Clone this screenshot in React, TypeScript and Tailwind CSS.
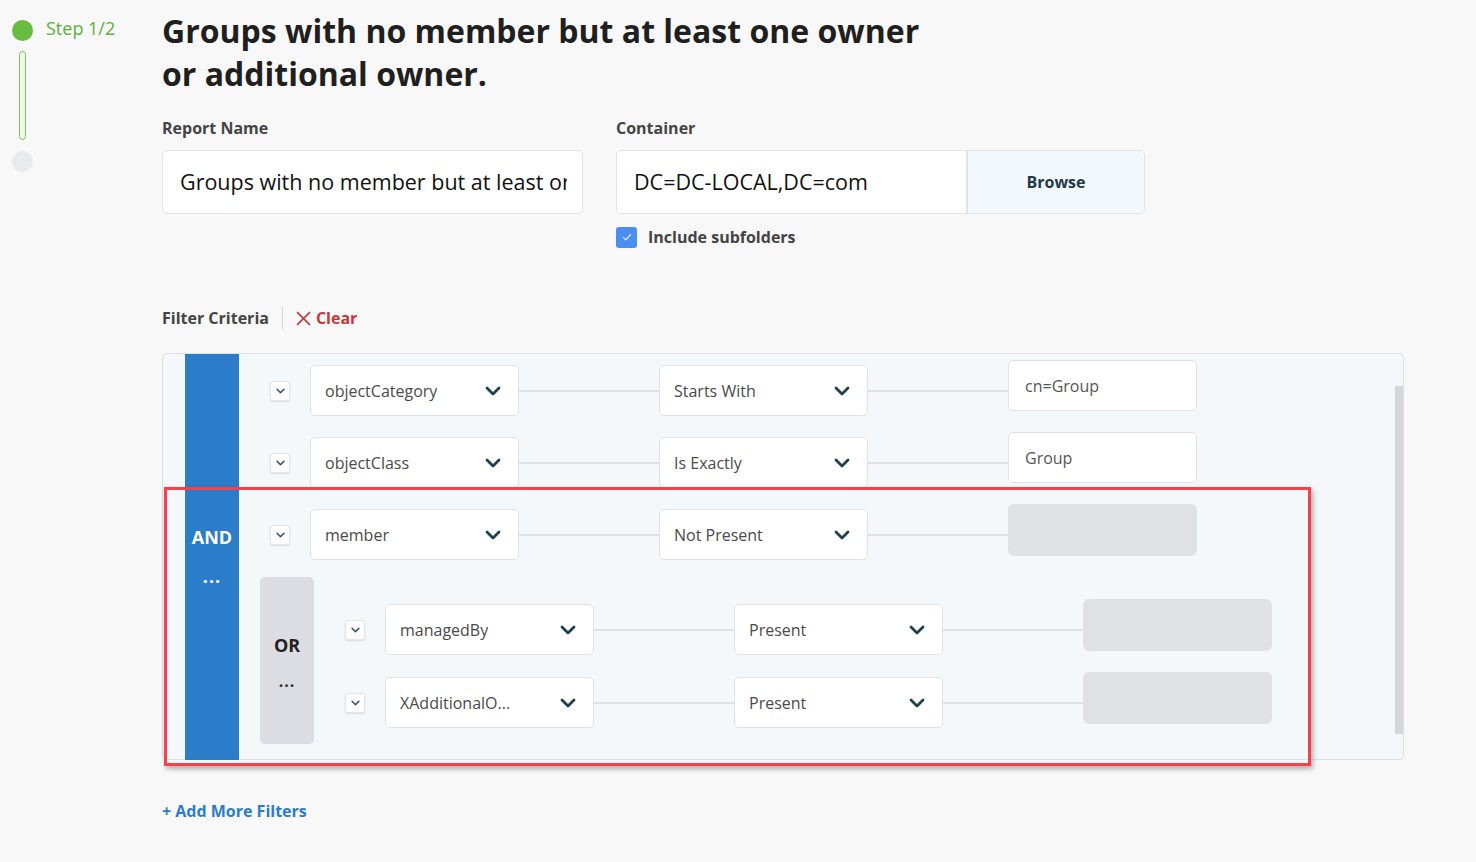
import React from 'react';

type Row = { field: string; op: string; value?: string };

const font = { fontFamily: '"Open Sans", "Noto Sans", sans-serif' };

function Chevron({ className = '' }: { className?: string }) {
  return (
    <svg viewBox="0 0 16 10" className={className} fill="none">
      <path d="M2 2l6 6 6-6" stroke="currentColor" strokeWidth="2.8" strokeLinecap="round" strokeLinejoin="round" />
    </svg>
  );
}

function Toggle() {
  return (
    <div className="w-5 h-5 shrink-0 rounded-[3px] bg-white border border-[#e3e7ea] shadow-[0_1px_2px_rgba(0,0,0,0.12)] flex items-center justify-center text-[#2d5468]">
      <Chevron className="w-[9px] h-[6px]" />
    </div>
  );
}

function Select({ label }: { label: string }) {
  return (
    <div className="w-[209px] h-[51px] shrink-0 bg-white border border-[#dfe3e6] rounded-[5px] flex items-center justify-between pl-[14px] pr-[17px]">
      <span className="text-[16px] text-[#4a4a4a] truncate">{label}</span>
      <Chevron className="w-[16px] h-[10px] text-[#1d3f50]" />
    </div>
  );
}

function Line() {
  return <div className="w-[140px] h-[2px] shrink-0 bg-[#dfe2e5]" />;
}

function FilterRow({ row }: { row: Row }) {
  return (
    <div className="flex items-center">
      <Toggle />
      <div className="w-5" />
      <Select label={row.field} />
      <Line />
      <Select label={row.op} />
      <Line />
      {row.value !== undefined ? (
        <div className="w-[189px] h-[51px] -mt-[10px] shrink-0 bg-white border border-[#dfe3e6] rounded-[5px] flex items-center px-4 text-[16px] text-[#555]">
          {row.value}
        </div>
      ) : (
        <div className="w-[189px] h-[52px] -mt-[10px] shrink-0 bg-[#e0e1e5] rounded-[6px]" />
      )}
    </div>
  );
}

const andRows: Row[] = [
  { field: 'objectCategory', op: 'Starts With', value: 'cn=Group' },
  { field: 'objectClass', op: 'Is Exactly', value: 'Group' },
  { field: 'member', op: 'Not Present' },
];

const orRows: Row[] = [
  { field: 'managedBy', op: 'Present' },
  { field: 'XAdditionalO...', op: 'Present' },
];

export default function App() {
  return (
    <div className="min-h-[862px] w-full bg-[#f8f8f8] flex" style={font}>
      {/* Stepper */}
      <div className="w-[162px] shrink-0 pl-3 pt-5">
        <div className="h-[21px] flex items-center gap-[13px]">
          <div className="w-[21px] h-[21px] rounded-full bg-[#66bd3f]" />
          <span className="text-[18px] leading-none text-[#5eae3a] -mt-[5px]">Step 1/2</span>
        </div>
        <div className="ml-[7px] mt-[10px] w-[7px] h-[89px] rounded-full border border-[#7cc55a] bg-[#f0f7ec]" />
        <div className="mt-[11px] w-[21px] h-[21px] rounded-full bg-[#e9eaee]" />
      </div>

      {/* Main */}
      <div className="w-[1242px] shrink-0 pt-[9px]">
        <h1 className="max-w-[790px] text-[32px] leading-[43px] font-bold text-[#1f1f1f]">
          Groups with no member but at least one owner or additional owner.
        </h1>

        <div className="mt-[22px] flex gap-[33px]">
          <div className="w-[421px]">
            <div className="text-[16px] leading-[22px] font-bold text-[#444]">Report Name</div>
            <div className="mt-[11px] h-[64px] bg-white border border-[#dfe3e6] rounded-[5px] flex items-center pl-[17px] pr-[15px]">
              <div className="overflow-hidden whitespace-nowrap text-[21.5px] text-[#111]">
                Groups with no member but at least one owner
              </div>
            </div>
          </div>
          <div className="w-[529px]">
            <div className="text-[16px] leading-[22px] font-bold text-[#444]">Container</div>
            <div className="mt-[11px] h-[64px] flex border border-[#dfe3e6] rounded-[5px] overflow-hidden">
              <div className="w-[351px] bg-white flex items-center pl-[17px] border-r-2 border-[#dfe3e6]">
                <span className="text-[21.5px] text-[#111]">DC=DC-LOCAL,DC=com</span>
              </div>
              <div className="flex-1 bg-[#f2f8fb] flex items-center justify-center text-[16px] font-bold text-[#1e3a4a]">
                Browse
              </div>
            </div>
            <div className="mt-[11px] flex items-center gap-[11px]">
              <div className="w-[21px] h-[21px] rounded-[3px] bg-[#4a8ff0] flex items-center justify-center">
                <svg viewBox="0 0 12 10" className="w-[10px] h-[8px]" fill="none">
                  <path d="M1 5l3.5 3.5L11 1.5" stroke="white" strokeWidth="1.3" />
                </svg>
              </div>
              <span className="text-[16px] font-bold text-[#444]">Include subfolders</span>
            </div>
          </div>
        </div>

        <div className="mt-[58px] flex items-center h-[22px]">
          <span className="text-[16px] font-bold text-[#444]">Filter Criteria</span>
          <div className="mx-[13px] w-px h-[22px] bg-[#d8d8d8]" />
          <span className="flex items-center gap-[5px] text-[16px] font-bold text-[#c4393c]">
            <svg viewBox="0 0 14 14" className="w-[15px] h-[15px]" fill="none">
              <path d="M1 1l12 12M13 1L1 13" stroke="currentColor" strokeWidth="1.5" />
            </svg>
            Clear
          </span>
        </div>

        {/* Filter panel */}
        <div className="relative mt-[24px] h-[407px] bg-[#f5f8fa] border border-[#dde1e5] rounded-[4px] pl-[22px] pr-4 flex">
          <div className="w-[54px] shrink-0 bg-[#2b7cc9] flex flex-col items-center justify-center pb-[6px] text-white -mb-px">
            <span className="text-[18px] font-bold">AND</span>
            <span className="mt-[16px] text-[18px] leading-none font-bold tracking-[1px]">...</span>
          </div>
          <div className="pl-[31px] pt-[11px] flex flex-col">
            <div className="flex flex-col gap-[21px]">
              {andRows.map((r, i) => (
                <FilterRow key={i} row={r} />
              ))}
            </div>
            <div className="mt-[17px] -ml-[10px] flex">
              <div className="w-[54px] h-[167px] shrink-0 bg-[#dcdde2] rounded-[5px] flex flex-col items-center justify-center">
                <span className="text-[18px] leading-[25px] font-bold text-[#222]">OR</span>
                <span className="mt-[15px] text-[16px] leading-none font-bold text-[#333] tracking-[1px]">...</span>
              </div>
              <div className="pl-[31px] pt-[27px] flex flex-col gap-[22px]">
                {orRows.map((r, i) => (
                  <FilterRow key={i} row={r} />
                ))}
              </div>
            </div>
          </div>

          {/* scrollbar */}
          <div className="absolute right-0 top-[32px] w-2 h-[348px] bg-[#d6d6d6]" />

          {/* highlight annotation */}
          <div className="absolute left-[1px] top-[133px] w-[1147px] h-[279px] border-[3px] border-[#f5424a] shadow-[2px_3px_5px_rgba(0,0,0,0.3)] pointer-events-none" />
        </div>

        <div className="mt-[40px] text-[16px] leading-[22px] font-bold text-[#2b7cc9]">+ Add More Filters</div>
      </div>
    </div>
  );
}
